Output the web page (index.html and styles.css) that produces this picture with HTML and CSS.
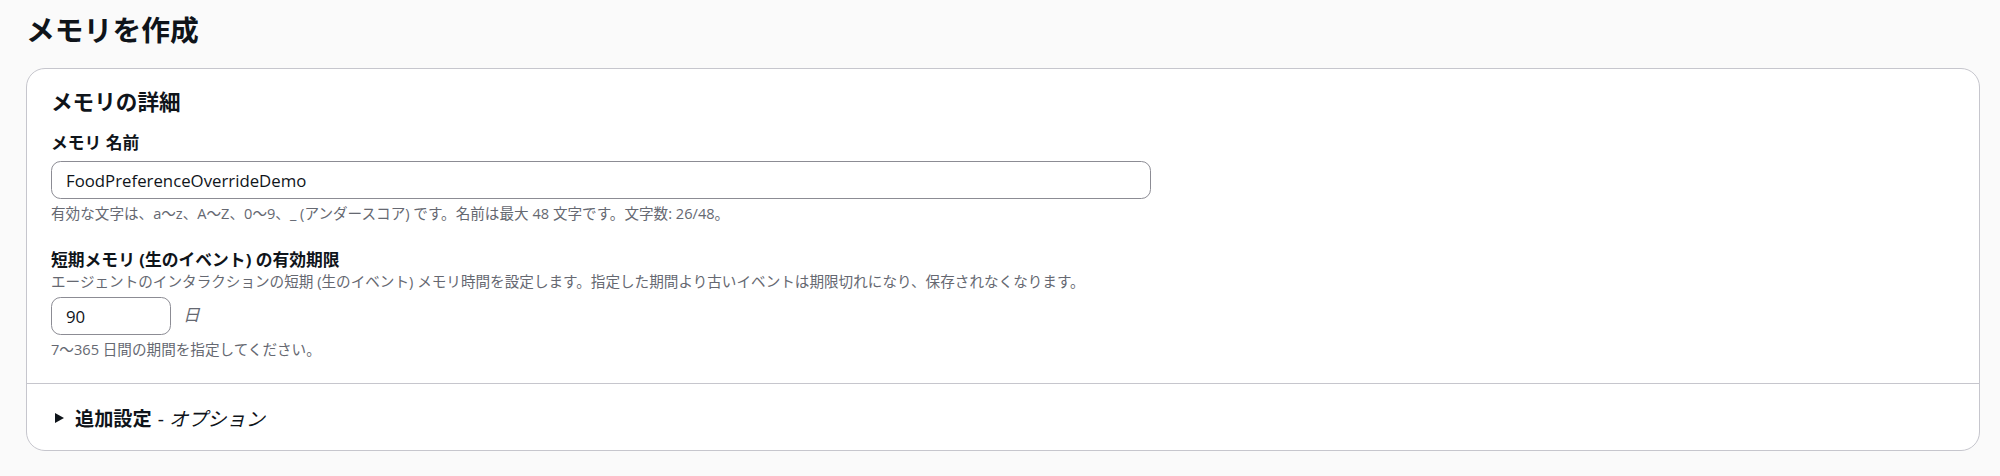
FILE: index.html
```html
<!DOCTYPE html>
<html lang="ja">
<head>
<meta charset="utf-8">
<title>メモリを作成</title>
<link rel="stylesheet" href="styles.css">
</head>
<body>
<div class="page">
  <h1 class="page-title">メモリを作成</h1>
  <section class="container">
    <div class="container-body">
      <h2 class="container-header">メモリの詳細</h2>
      <div class="field field-name">
        <label class="field-label">メモリ 名前</label>
        <div class="input input-wide">FoodPreferenceOverrideDemo</div>
        <div class="field-hint">有効な文字は、a〜z、A〜Z、0〜9、_ (アンダースコア) です。名前は最大 48 文字です。文字数: 26/48。</div>
      </div>
      <div class="field field-expiry">
        <label class="field-label">短期メモリ (生のイベント) の有効期限</label>
        <div class="field-desc">エージェントのインタラクションの短期 (生のイベント) メモリ時間を設定します。指定した期間より古いイベントは期限切れになり、保存されなくなります。</div>
        <div class="input-row">
          <div class="input input-small">90</div>
          <span class="unit">日</span>
        </div>
        <div class="field-hint">7〜365 日間の期間を指定してください。</div>
      </div>
    </div>
    <div class="container-footer">
      <span class="caret"></span>
      <span class="expand-title">追加設定</span>
      <span class="expand-opt">- <i>オプション</i></span>
    </div>
  </section>
</div>
</body>
</html>
```
FILE: styles.css
```css
html, body {
  margin: 0;
  padding: 0;
  background: #fafafa;
}
body {
  font-family: "Open Sans", "Noto Sans CJK JP", sans-serif;
  color: #0f141a;
}
.page {
  padding: 12px 20px 0 26px;
  display: flex;
  flex-direction: column;
}
.page-title {
  margin: 0;
  font-size: 28.8px;
  line-height: 36px;
  font-weight: 700;
  letter-spacing: 0;
}
.container {
  margin-top: 20px;
  background: #ffffff;
  border: 1px solid #c6c6cd;
  border-radius: 19px;
  display: flex;
  flex-direction: column;
}
.container-body {
  padding: 20px 24px 24px 24px;
  display: flex;
  flex-direction: column;
  border-bottom: 1px solid #c6c6cd;
}
.container-header {
  margin: 0;
  font-size: 21.6px;
  line-height: 26px;
  font-weight: 700;
}
.field {
  display: flex;
  flex-direction: column;
}
.field-name {
  margin-top: 17px;
}
.field-expiry {
  margin-top: 26px;
}
.field-label {
  font-size: 16.8px;
  line-height: 22px;
  font-weight: 700;
}
.field-name .field-label {
  margin-bottom: 7px;
}
.field-desc {
  margin-top: 1px;
  font-size: 14.6px;
  line-height: 19px;
  color: #656871;
  margin-bottom: 6px;
}
.input {
  box-sizing: border-box;
  height: 38px;
  border: 1.2px solid #8c8c94;
  border-radius: 9.6px;
  padding: 0 14px;
  display: flex;
  align-items: center;
  font-size: 16.8px;
  color: #0f141a;
  background: #ffffff;
}
.input-wide {
  width: 1100px;
}
.input-row {
  display: flex;
  align-items: center;
  gap: 12px;
}
.input-small {
  width: 120px;
}
.unit {
  font-style: italic;
  font-size: 16.8px;
  color: #656871;
  padding-bottom: 4px;
}
.field-hint {
  margin-top: 5px;
  font-size: 14.6px;
  line-height: 19px;
  color: #656871;
}
.container-footer {
  height: 66px;
  display: flex;
  align-items: center;
  padding: 1px 24px 0 28px;
  box-sizing: border-box;
  font-size: 19.2px;
}
.caret {
  width: 0;
  height: 0;
  border-top: 5.5px solid transparent;
  border-bottom: 5.5px solid transparent;
  border-left: 9px solid #0f141a;
  margin-right: 11px;
}
.expand-title {
  font-weight: 700;
}
.expand-opt {
  margin-left: 6px;
  font-weight: 400;
}
.expand-opt i {
  font-style: italic;
}
```
